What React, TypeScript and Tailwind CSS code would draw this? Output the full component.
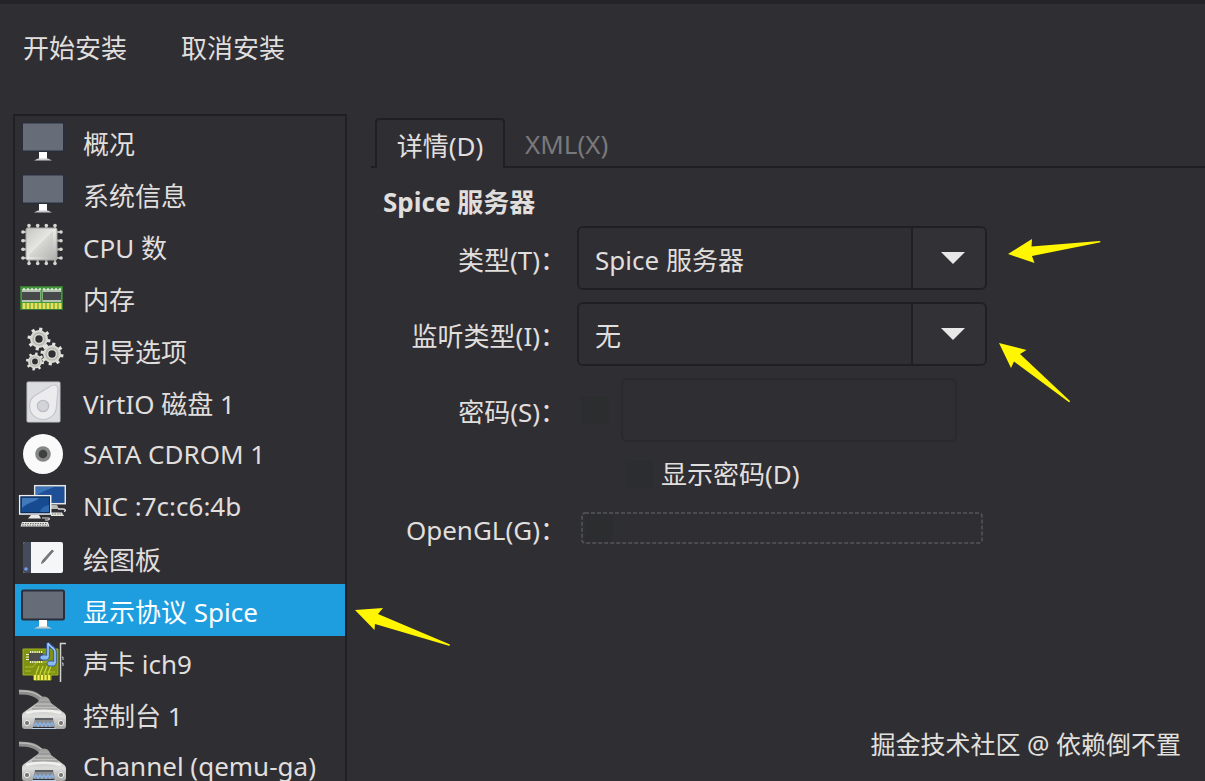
import type { ReactNode } from "react";

function Icon({ children }: { children: ReactNode }) {
  return (
    <svg viewBox="0 0 48 52" className="h-[52px] w-12 shrink-0" aria-hidden="true">
      {children}
    </svg>
  );
}

function MonitorIcon() {
  return (
    <Icon>
      <rect x="4" y="6.5" width="42" height="29" rx="1.5" fill="#676c79" stroke="#2a2e3b" strokeWidth="2" />
      <path d="M21 36h8v7h-8z" fill="#fff" />
      <path d="M16 44.5l4-2h10l4 2z" fill="#c9cbd0" />
    </Icon>
  );
}

function CpuIcon() {
  const pins = [11, 19.7, 28.3, 37];
  return (
    <Icon>
      <defs>
        <linearGradient id="cpu" x1="0" y1="0" x2="1" y2="1">
          <stop offset="0" stopColor="#c4c5c1" />
          <stop offset="0.5" stopColor="#e9e9e5" />
          <stop offset="1" stopColor="#a9aaa6" />
        </linearGradient>
      </defs>
      {pins.map((p) => (
        <g key={p} stroke="#b0b2ac" strokeWidth="2.2" strokeLinecap="round">
          <path d={`M${p} 5.500v38M4.500 ${p + 1}h38.500`} />
          <g fill="#d5d6d1" stroke="none">
            <circle cx={p} cy="5.5" r="1.8" />
            <circle cx={p} cy="43.5" r="1.8" />
            <circle cx="5" cy={p + 1} r="1.8" />
            <circle cx="43" cy={p + 1} r="1.8" />
          </g>
        </g>
      ))}
      <rect x="8" y="8" width="31" height="32" rx="1.5" fill="url(#cpu)" stroke="#a5a6a1" />
      <path d="M11 35L35 11v26H11z" fill="#b9bab6" opacity="0.4" />
    </Icon>
  );
}

function MemoryIcon() {
  const cells = [4, 8, 12, 16, 20, 24, 28, 32, 36, 40];
  return (
    <Icon>
      <rect x="2.5" y="14.5" width="42" height="23" fill="#459a3d" stroke="#377733" />
      <rect x="4" y="17" width="39" height="13" fill="#b5c4b0" />
      <rect x="4" y="20" width="18" height="8" fill="#46484a" />
      <rect x="25" y="20" width="18" height="8" fill="#46484a" />
      <path d="M23.5 15v15" stroke="#459a3d" strokeWidth="2" />
      {cells.map((x) => (
        <g key={x}>
          <rect x={x + 0.5} y="31" width="3" height="6" fill="#eadf55" />
          <rect x={x + 1} y="16" width="2" height="2" fill="#fff" opacity="0.6" />
        </g>
      ))}
    </Icon>
  );
}

function Gear({ cx, cy, r }: { cx: number; cy: number; r: number }) {
  const teeth = [10, 55, 100, 145, 190, 235, 280, 325];
  return (
    <g transform={`translate(${cx} ${cy})`}>
      {teeth.map((a) => (
        <rect key={a} x={-r * 0.14} y={-r} width={r * 0.28} height={r * 0.5} fill="#e3e3df" transform={`rotate(${a})`} />
      ))}
      <circle r={r * 0.55} fill="none" stroke="#d8d8d3" strokeWidth={r * 0.46} />
      <circle r={r * 0.52} fill="none" stroke="#b8b8b3" strokeWidth={r * 0.14} />
    </g>
  );
}

function GearsIcon() {
  return (
    <Icon>
      <Gear cx={21} cy={15} r={11.5} />
      <Gear cx={34} cy={30} r={11.5} />
      <Gear cx={17} cy={37.5} r={9} />
    </Icon>
  );
}

function DiskIcon() {
  return (
    <Icon>
      <rect x="9" y="6" width="33" height="40" rx="1" fill="#dcdde1" stroke="#c3c4c8" />
      <path d="M36 9c3 0 4 2 4 5l-1.500 16a13.500 13.500 0 1 1-23-9.500L32 10.500c1.500-1 2.500-1.500 4-1.500z" fill="#ececef" stroke="#c4c6ca" strokeWidth="1.2" />
      <circle cx="25" cy="30" r="5.600" fill="#d3d4d9" stroke="#bcbec3" strokeWidth="1.400" />
    </Icon>
  );
}

function DiscIcon() {
  return (
    <Icon>
      <circle cx="25" cy="26" r="20" fill="#fafafa" />
      <circle cx="25" cy="26" r="7.800" fill="#868686" />
      <circle cx="25" cy="26" r="4.300" fill="#3f4042" />
    </Icon>
  );
}

function NetworkIcon() {
  return (
    <Icon>
      <rect x="16.700" y="5.700" width="30.600" height="18" fill="#1f4f96" stroke="#e6e7e4" strokeWidth="1.500" />
      <path d="M18 7h18c-6 3-12 4-18 9z" fill="#3d74b8" />
      <path d="M31 25h8l2 4h-9z" fill="#b9bab6" />
      <path d="M33 32.500h11l2 3.500H33z" fill="#e3e4e0" />
      <path d="M34 34h11" stroke="#77786f" strokeDasharray="1.500 1" />
      <path d="M40 29h5c3 0 3 2 1 2.500" fill="none" stroke="#dddeda" strokeWidth="1.300" />
      <rect x="1.700" y="15.700" width="31" height="18.300" fill="#174b91" stroke="#f0f1ee" strokeWidth="1.500" />
      <rect x="3" y="17" width="28.400" height="15.600" fill="none" stroke="#102a50" />
      <path d="M4 18h17c-3 4-11 4-17 10z" fill="#4179bb" />
      <path d="M22 32c1-4 4-6 9-7v7z" fill="#2d68b1" />
      <path d="M13 35h8l2 3.500H10z" fill="#e9eae7" />
      <path d="M4 42h26l1.500 4.500H2.500z" fill="#e6e7e4" />
      <path d="M4.500 43.500h25M4 45.200h26" stroke="#74756f" strokeDasharray="1.500 1" />
      <path d="M24 38h6c2 0 2 1.500 0 2h-3" fill="none" stroke="#dddeda" strokeWidth="1.200" />
    </Icon>
  );
}

function TabletIcon() {
  return (
    <Icon>
      <rect x="5" y="10" width="40" height="31" rx="2" fill="#f5f6f7" />
      <path d="M7 10h6v31H7a2 2 0 0 1-2-2V12a2 2 0 0 1 2-2z" fill="#464b5b" />
      <circle cx="8" cy="37" r="1.800" fill="#6d9ff0" />
      <path d="M23.500 31.500l1-3L34 18l1.500 1L26 30z" fill="#74767a" stroke="#74767a" />
    </Icon>
  );
}

function SoundIcon() {
  return (
    <Icon>
      <path d="M5 13h35v26h-7v5H16v-5H5z" fill="#7f9212" stroke="#a2b51b" />
      <path d="M7 31h8l4-5h16M7 35h6M27 36h10" fill="none" stroke="#b9ca36" strokeWidth="0.800" />
      <path d="M12 16h13M12 26h13" stroke="#f2f3dc" strokeWidth="2" strokeDasharray="1.200 1" />
      <rect x="11" y="17" width="14" height="8" fill="#4b4c4b" />
      <path d="M8 18.500h3M8 21h3M8 23.500h3" stroke="#eee" />
      <path d="M18 39c0-4 2-5 3-9M22 39c0-4 2-5 3-9M26 39c0-4 2-5 3-9M30 39c0-4 2-5 3-9" fill="none" stroke="#c6d63a" strokeWidth="1.200" />
      <path d="M17 39v5M20.500 39v5M24 39v5M27.500 39v5M31 39v5" stroke="#f5ee58" strokeWidth="2.200" />
      <path d="M48 7.500h-5.500V46" fill="none" stroke="#d2d4d2" strokeWidth="1.500" />
      <path d="M44 21h1v3M44 27h1v3" fill="none" stroke="#cfd0cd" />
      <path d="M30 21V7c1 4 7 4 7 9v11" fill="none" stroke="#2c5cae" strokeWidth="3.500" />
      <ellipse cx="26.500" cy="21.500" rx="4.500" ry="2.600" fill="#8db8f2" stroke="#2c5cae" />
      <ellipse cx="33.500" cy="27.500" rx="4.500" ry="2.600" fill="#8db8f2" stroke="#2c5cae" />
      <path d="M30 21V7c1 4 7 4 7 9v11" fill="none" stroke="#a6caf9" strokeWidth="1.500" />
    </Icon>
  );
}

function SerialIcon({ id }: { id: string }) {
  return (
    <Icon>
      <defs>
        <linearGradient id={id} x1="0" y1="0" x2="0" y2="1">
          <stop offset="0" stopColor="#999a98" />
          <stop offset="0.600" stopColor="#dededc" />
          <stop offset="1" stopColor="#a7a8a6" />
        </linearGradient>
      </defs>
      <path d="M1 4c10 0 17 1 24 9" fill="none" stroke="#8d8e8c" strokeWidth="5" />
      <path d="M1 3c10 0 17 1 25 8" fill="none" stroke="#b9bab8" strokeWidth="1.500" />
      <path d="M22 10c3-2 6-2 9 1l2 4 12 9c2 1 3 3 3 5v9c0 2-1 3-3 3h-8l-2-4H16l-2 4H7c-2 0-3-1-3-3v-9c0-2 0-4 2-5l14-10z" fill={`url(#${id})`} />
      <path d="M20 14h13M17 18h20M14 21h26" stroke="#858684" strokeWidth="0.900" />
      <path d="M8 25c10-3 25-3 35 0" fill="none" stroke="#f1f1ef" strokeWidth="2.500" />
      <path d="M17 30h18l2 9H15z" fill="#8a8d92" />
      <path d="M17 31h18" stroke="#5d6065" strokeWidth="2" />
      <path d="M16 38l2-3 2 3 2-3 2 3 2-3 2 3 2-3 2 3 2-3 2 3" fill="none" stroke="#88afdd" strokeWidth="1.800" />
      <path d="M14 40.500h24" stroke="#b9d0ea" />
      <circle cx="9" cy="35" r="2.600" fill="#777876" stroke="#f0f0ee" />
      <circle cx="43" cy="35" r="2.600" fill="#777876" stroke="#f0f0ee" />
    </Icon>
  );
}

const devices: { label: string; icon: ReactNode; selected?: boolean }[] = [
  { label: "概况", icon: <MonitorIcon /> },
  { label: "系统信息", icon: <MonitorIcon /> },
  { label: "CPU 数", icon: <CpuIcon /> },
  { label: "内存", icon: <MemoryIcon /> },
  { label: "引导选项", icon: <GearsIcon /> },
  { label: "VirtIO 磁盘 1", icon: <DiskIcon /> },
  { label: "SATA CDROM 1", icon: <DiscIcon /> },
  { label: "NIC :7c:c6:4b", icon: <NetworkIcon /> },
  { label: "绘图板", icon: <TabletIcon /> },
  { label: "显示协议 Spice", icon: <MonitorIcon />, selected: true },
  { label: "声卡 ich9", icon: <SoundIcon /> },
  { label: "控制台 1", icon: <SerialIcon id="console" /> },
  { label: "Channel (qemu-ga)", icon: <SerialIcon id="channel" /> },
];

/* Labels without CJK glyphs have a shorter line and centre slightly higher. */
const isLatin = (text: string) => /^[\x20-\x7e]+$/.test(text);

function Combo({ id, value }: { id: string; value: string }) {
  return (
    <div className="relative w-[410px]">
      <select
        id={id}
        className="h-16 w-full appearance-none rounded-md border-2 border-[#202024] bg-[#2f2e33] px-4 pt-1 outline-none"
      >
        <option>{value}</option>
      </select>
      <span className="pointer-events-none absolute inset-y-0.5 right-0.5 flex w-[74px] items-center justify-center rounded-r border-l-2 border-[#202024] bg-[#323136] pl-2">
        <svg viewBox="0 0 24 12" className="h-3 w-6" aria-hidden="true">
          <path d="M0 0h24L12 12z" fill="#e8e8e8" />
        </svg>
      </span>
    </div>
  );
}

const check = "size-7 shrink-0 appearance-none rounded-sm bg-[#2c2d2e]";

export default function App() {
  return (
    <div className="relative flex h-screen flex-col overflow-hidden border-t-4 border-[#242327] bg-[#2f2e33] font-['Noto_Sans','Noto_Sans_CJK_SC',sans-serif] text-[26px] leading-9 text-[#e0dfdd]">
      <header className="flex shrink-0 gap-[54px] px-[23px] pt-[26px] pb-12">
        <button type="button">开始安装</button>
        <button type="button">取消安装</button>
      </header>

      <div className="flex min-h-0 grow">
        <nav className="ml-[13px] w-[334px] shrink-0 overflow-hidden border-2 border-b-0 border-[#202024]">
          <ul>
            {devices.map((d) => (
              <li key={d.label}>
                <button
                  type="button"
                  className={
                    d.selected
                      ? "flex h-[52px] w-full items-center gap-[17px] bg-[#1e9edf] pl-[3px] text-left whitespace-nowrap text-white"
                      : "flex h-[52px] w-full items-center gap-[17px] pl-[3px] text-left whitespace-nowrap"
                  }
                >
                  {d.icon}
                  <span className={isLatin(d.label) ? "leading-8" : "pt-1"}>{d.label}</span>
                </button>
              </li>
            ))}
          </ul>
        </nav>

        <main className="ml-6 min-w-0 grow pt-1">
          <div className="flex" role="tablist">
            <span className="w-1 border-b-2 border-[#202024]" />
            <button
              type="button"
              role="tab"
              aria-selected="true"
              className="h-[50px] w-[130px] rounded-t-sm border-2 border-b-0 border-[#202024] pt-1"
            >
              详情(D)
            </button>
            <div className="grow border-b-2 border-[#202024]">
              <button type="button" role="tab" aria-selected="false" className="h-12 px-5 pt-1 text-[#79797c]">
                XML(X)
              </button>
            </div>
          </div>

          <h2 className="mt-4 ml-3 font-bold">Spice 服务器</h2>

          <form className="mt-1.5 grid grid-cols-[195px_auto] justify-start gap-x-[11px] gap-y-3">
            <label htmlFor="kind" className="self-center justify-self-end pt-1">
              类型(T)：
            </label>
            <Combo id="kind" value="Spice 服务器" />

            <label htmlFor="listen" className="self-center justify-self-end pt-1">
              监听类型(I)：
            </label>
            <Combo id="listen" value="无" />

            <label htmlFor="password" className="self-center justify-self-end pt-1">
              密码(S)：
            </label>
            <div className="flex items-center gap-3 pl-1">
              <input type="checkbox" disabled aria-label="密码" className={check} />
              <input
                id="password"
                type="password"
                disabled
                className="h-16 w-[336px] rounded-md border-2 border-[#2a292e] bg-transparent px-4"
              />
            </div>

            <label className="col-start-2 flex h-10 items-center gap-2 pl-12">
              <input type="checkbox" disabled className={check} />
              显示密码(D)
            </label>

            <label htmlFor="opengl" className="self-center justify-self-end pt-1">
              OpenGL(G)：
            </label>
            <div className="flex h-11 items-center pl-1">
              <div className="flex h-8 w-[402px] items-center pl-1 relative">
                <input id="opengl" type="checkbox" className={check} />
                <svg className="pointer-events-none absolute inset-0 h-full w-full" aria-hidden="true">
                  <rect
                    x="1"
                    y="1"
                    width="400"
                    height="30"
                    rx="3"
                    fill="none"
                    stroke="#57565a"
                    strokeWidth="1.5"
                    strokeDasharray="4 2"
                  />
                </svg>
              </div>
            </div>
          </form>
        </main>
      </div>

      <svg viewBox="0 0 94 26" className="pointer-events-none absolute top-[234px] left-[1007px] h-[26px] w-[94px]" aria-hidden="true">
        <path d="M1 16L25 1l-.5 7.500L92.500 3q2 .5 0 1.600L25 18l2.500 7z" fill="#fff600" />
      </svg>
      <svg viewBox="0 0 74 62" className="pointer-events-none absolute top-[338px] left-[998px] h-[62px] w-[74px]" aria-hidden="true">
        <path d="M1 1L28.500 8l-6.500 4L72 59q0 2-2 .5L16 19.500 13 26z" fill="#fff600" />
      </svg>
      <svg viewBox="0 0 98 42" className="pointer-events-none absolute top-[604px] left-[354px] h-[42px] w-[98px]" aria-hidden="true">
        <path d="M1 2L29 0 24 6l72 30.500q0 2-2 1L21 16 20.500 22z" fill="#fff600" />
      </svg>

      <p className="absolute right-6 bottom-[17px] text-[25px] leading-10 text-[#e2e1df]">掘金技术社区 @ 依赖倒不置</p>
    </div>
  );
}
